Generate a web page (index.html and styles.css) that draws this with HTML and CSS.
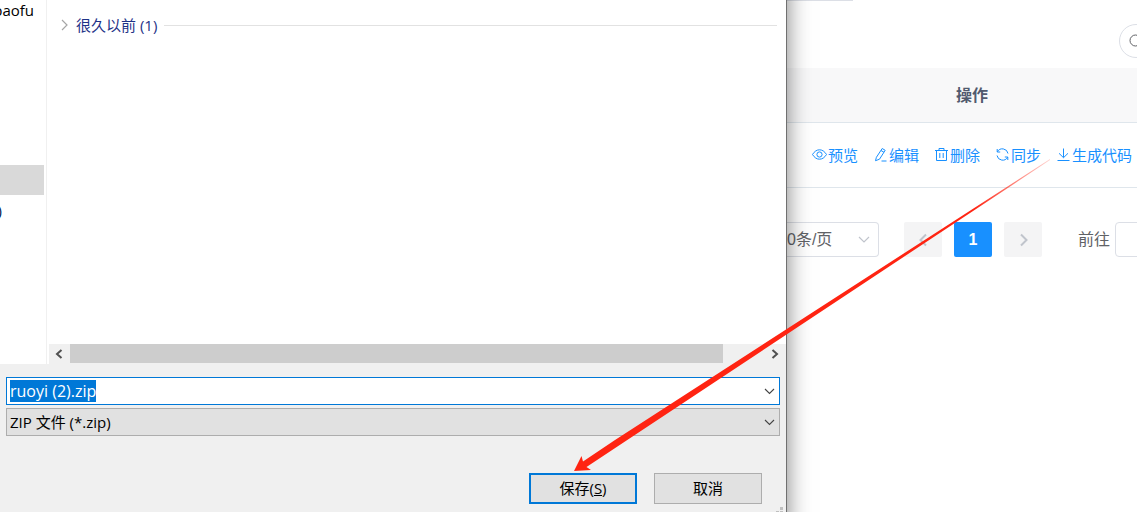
FILE: index.html
```html
<!DOCTYPE html>
<html lang="zh-CN">
<head>
<meta charset="utf-8">
<title>代码生成</title>
<link rel="stylesheet" href="styles.css">
</head>
<body>

<div class="dialog">
	<div class="browser">
		<div class="sidebar">
			<a href="#" class="folder account"><span>baofu</span></a>
			<a href="#" class="folder current" aria-label="下载"></a>
			<a href="#" class="folder"><span>)</span></a>
		</div>
		<div class="files">
			<div class="group">
				<svg width="8" height="12" viewBox="0 0 8 12"><path d="M1 1l5 5-5 5" fill="none" stroke="#a6a6a6" stroke-width="1.2"/></svg>
				<span>很久以前 (1)</span>
				<hr>
			</div>
			<div class="scrollbar">
				<button type="button" aria-label="向左"><svg width="8" height="10" viewBox="0 0 8 10"><path d="M6.500 1L2 5l4.500 4" fill="none" stroke="#505050" stroke-width="2"/></svg></button>
				<div class="track"><div class="thumb"></div></div>
				<button type="button" aria-label="向右"><svg width="8" height="10" viewBox="0 0 8 10"><path d="M1.500 1L6 5l-4.500 4" fill="none" stroke="#505050" stroke-width="2"/></svg></button>
			</div>
		</div>
	</div>

	<form class="save">
		<div class="field">
			<input type="text" id="filename" aria-label="文件名" value="ruoyi (2).zip">
			<svg class="arrow" width="11" height="7" viewBox="0 0 11 7"><path d="M1 1l4.500 4.500L10 1" fill="none" stroke="#444" stroke-width="1.1"/></svg>
		</div>
		<div class="field">
			<select aria-label="保存类型"><option>ZIP 文件 (*.zip)</option></select>
			<svg class="arrow" width="11" height="7" viewBox="0 0 11 7"><path d="M1 1l4.500 4.500L10 1" fill="none" stroke="#444" stroke-width="1.1"/></svg>
		</div>
		<div class="buttons">
			<button type="button" class="default">保存(<u>S</u>)</button>
			<button type="button">取消</button>
		</div>
	</form>
	<svg class="grip" width="8" height="5" viewBox="0 0 8 5"><path d="M4 0h3v3H4zM0 4h3v1H0zM4 4h3v1H4z" fill="#bfbfbf"/></svg>
</div>

<div class="page">
	<div class="query"></div>
	<div class="toolbar">
		<button type="button" class="circle" aria-label="搜索"><svg width="14" height="14" viewBox="0 0 14 14"><path d="M6.500 1a5.500 5.500 0 1 0 0 11a5.500 5.500 0 0 0 0-11zM10.500 10.500L13 13" fill="none" stroke="#606266"/></svg></button>
	</div>

	<table>
		<thead><tr><th>操作</th></tr></thead>
		<tbody><tr><td>
			<div class="actions">
				<a href="#"><svg viewBox="0 0 15 15"><path d="M.5 7.500C2.500 4.300 4.800 2.800 7.500 2.800s5 1.500 7 4.700c-2 3.200-4.300 4.700-7 4.700s-5-1.500-7-4.700z"/><circle cx="7.500" cy="7.500" r="2.600"/></svg>预览</a>
				<a href="#"><svg viewBox="0 0 15 15"><path d="M9.200 1.500l3 1.800-5.700 8.900-4 1.500.9-3.400zM8 3.500l3 1.800M8.500 14h5"/></svg>编辑</a>
				<a href="#"><svg viewBox="0 0 15 15"><path d="M1 3.500h13M5 3.500v-2h5v2M2.500 3.500v10h10v-10M5.800 6v5M9.200 6v5"/></svg>删除</a>
				<a href="#"><svg viewBox="0 0 15 15"><path d="M2.200 5V2M2.200 5h3M2.400 4.800A5.700 5.700 0 0 1 13 6.500M12.800 10v3M12.800 10h-3M12.600 10.200A5.700 5.700 0 0 1 2 8.500"/></svg>同步</a>
				<a href="#"><svg viewBox="0 0 15 15"><path d="M7.500 1.500v9M3 6.300l4.500 4.400L12 6.300M1.500 13.500h12"/></svg>生成代码</a>
			</div>
		</td></tr></tbody>
	</table>

	<div class="pagination">
		<div class="size">
			<select aria-label="每页条数"><option>0条/页</option></select>
			<svg class="arrow" width="12" height="8" viewBox="0 0 12 8"><path d="M1 1l5 5 5-5" fill="none" stroke="#c0c4cc" stroke-width="1.200"/></svg>
		</div>
		<div class="pager">
			<button type="button" aria-label="上一页"><svg width="9" height="14" viewBox="0 0 9 14"><path d="M7 1.500L1.500 7 7 12.500" fill="none" stroke="#c0c4cc" stroke-width="2"/></svg></button>
			<button type="button" class="active">1</button>
			<button type="button" aria-label="下一页"><svg width="9" height="14" viewBox="0 0 9 14"><path d="M2 1.500L7.500 7 2 12.500" fill="none" stroke="#c0c4cc" stroke-width="2"/></svg></button>
		</div>
		<label for="jump">前往</label>
		<input type="text" id="jump">
	</div>
</div>

<!-- arrow from the download link to the save button -->
<svg class="pointer" width="480" height="316" viewBox="0 0 480 316">
	<defs>
		<linearGradient id="fade" gradientUnits="userSpaceOnUse" x1="476" y1="3" x2="400" y2="53">
			<stop offset="0" stop-color="#ff2412" stop-opacity=".2"/>
			<stop offset="1" stop-color="#ff2412"/>
		</linearGradient>
	</defs>
	<path d="M476 2L41 283 9 304.500 7.500 299 0 314 17 313 12.500 310 51 284.500 476 3z" fill="url(#fade)"/>
</svg>

<script>
var filename = document.getElementById("filename");
filename.focus();
filename.select();
</script>
</body>
</html>
```
FILE: styles.css
```css
*
{
	box-sizing: border-box;
}
body
{
	display: grid;
	grid-template-columns: minmax(0, 1fr) 350px;
	min-height: 100vh;
	margin: 0;
	overflow: hidden;
	position: relative;
	background-color: #fff;
	font-family: "Liberation Sans", "Noto Sans CJK SC", sans-serif;
	font-size: 15px;
}
a
{
	text-decoration: none;
}
button, input, select
{
	font: inherit;
	color: inherit;
	margin: 0;
	outline: none;
	appearance: none;
	border-radius: 0;
}
svg
{
	flex: none;
}

/* save dialog */
.dialog
{
	display: flex;
	flex-direction: column;
	position: relative;
	z-index: 1;
	background-color: #f0f0f0;
	border-right: 1px solid #707070;
	box-shadow: -20px 0 22px 20px rgba(0, 0, 0, .5);
	font-family: "Open Sans", "Noto Sans CJK SC", sans-serif;
	color: #000;
}
.browser
{
	display: flex;
	flex: 1;
	background-color: #fff;
}
.sidebar
{
	width: 47px;
	padding-right: 2px;
	border-right: 1px solid #f0f0f0;
	overflow: hidden;
}
.folder
{
	display: flex;
	justify-content: flex-end;
	align-items: center;
	height: 30px;
	padding-right: 42px;
	color: #001a4d;
}
.account
{
	height: 20px;
	margin-bottom: 145px;
	padding-right: 10px;
	color: #000;
}
.current
{
	background-color: #d9d9d9;
}
.files
{
	display: flex;
	flex: 1;
	flex-direction: column;
	justify-content: space-between;
	padding-left: 2px;
}
.group
{
	display: flex;
	align-items: center;
	gap: 7px;
	padding: 15px 9px 0 12px;
	line-height: 20px;
	color: #1e3287;
}
.group hr
{
	flex: 1;
	margin: 0;
	border: 0;
	border-top: 1px solid #e2e2e2;
}
.scrollbar
{
	display: flex;
	height: 20px;
	background-color: #f0f0f0;
}
.scrollbar button
{
	display: flex;
	align-items: center;
	justify-content: center;
	width: 21px;
	padding: 0 2px 0 0;
	border: 0;
	background: none;
}
.track
{
	flex: 1;
}
.thumb
{
	width: 94%;
	height: 19px;
	background-color: #cdcdcd;
}
.save
{
	display: flex;
	flex-direction: column;
	gap: 3px;
	padding: 13px 6px 8px;
}
.field
{
	display: grid;
	position: relative;
}
.field input,
.field select
{
	width: 100%;
	height: 28px;
	padding: 0 3px;
	border: 1px solid #adadad;
	background-color: #e1e1e1;
}
.field input
{
	border-color: #0078d7;
	background-color: #fff;
	font-size: 16px;
}
.field input::selection
{
	background-color: #0078d7;
	color: #fff;
}
.arrow
{
	position: absolute;
	right: 5px;
	top: 11px;
	pointer-events: none;
}
.buttons
{
	display: flex;
	justify-content: flex-end;
	gap: 17px;
	padding: 34px 18px 0 0;
}
.buttons button
{
	width: 108px;
	height: 31px;
	padding: 0 0 2px;
	border: 1px solid #adadad;
	background-color: #e1e1e1;
}
.buttons .default
{
	border: 2px solid #0078d7;
}
.grip
{
	position: absolute;
	right: 2px;
	bottom: 0;
}

/* generator page */
.page
{
	overflow: hidden;
	color: #606266;
}
.query
{
	width: 66px;
	height: 1px;
	background-color: #dcdfe6;
}
.toolbar
{
	display: flex;
	justify-content: flex-end;
	margin-right: -16px;
	padding: 23px 0 10px;
}
.circle
{
	display: flex;
	align-items: center;
	width: 34px;
	height: 34px;
	padding: 0 9px;
	border: 1px solid #dcdfe6;
	border-radius: 50%;
	background-color: #fff;
}
table
{
	width: 100%;
	border-collapse: separate;
	border-spacing: 0;
}
th,
td
{
	height: 55px;
	padding: 0 0 2px 20px;
	border-bottom: 1px solid #dfe6ec;
	text-align: center;
}
th
{
	background-color: #f8f8f9;
	color: #515a6e;
	font-size: 16px;
}
td
{
	height: 65px;
}
.actions
{
	display: flex;
	justify-content: center;
	gap: 15px;
	white-space: nowrap;
}
.actions a
{
	display: flex;
	align-items: center;
	gap: 1px;
	color: #1890ff;
}
.actions svg
{
	width: 15px;
	height: 15px;
	fill: none;
	stroke: #1890ff;
}
.pagination
{
	display: flex;
	align-items: center;
	margin-top: 34px;
	font-size: 16px;
}
.size
{
	position: relative;
	margin-right: 25px;
}
.size select
{
	display: block;
	width: 92px;
	height: 35px;
	padding: 0;
	border: 1px solid #dcdfe6;
	border-left: 0;
	border-radius: 0 4px 4px 0;
	background-color: #fff;
}
.size .arrow
{
	right: 9px;
	top: 14px;
}
.pager
{
	display: flex;
	gap: 12px;
	margin-right: 36px;
}
.pager button
{
	display: flex;
	align-items: center;
	justify-content: center;
	width: 38px;
	height: 35px;
	padding: 0;
	border: 0;
	border-radius: 2px;
	background-color: #f4f4f5;
	font-weight: bold;
}
.pager .active
{
	background-color: #1890ff;
	color: #fff;
}
.pagination label
{
	flex: none;
	margin-right: 5px;
	padding-bottom: 3px;
}
#jump
{
	flex: none;
	width: 62px;
	height: 35px;
	border: 1px solid #dcdfe6;
	border-radius: 4px;
}

.pointer
{
	position: absolute;
	right: 83px;
	top: 157px;
	z-index: 2;
	pointer-events: none;
}
```
